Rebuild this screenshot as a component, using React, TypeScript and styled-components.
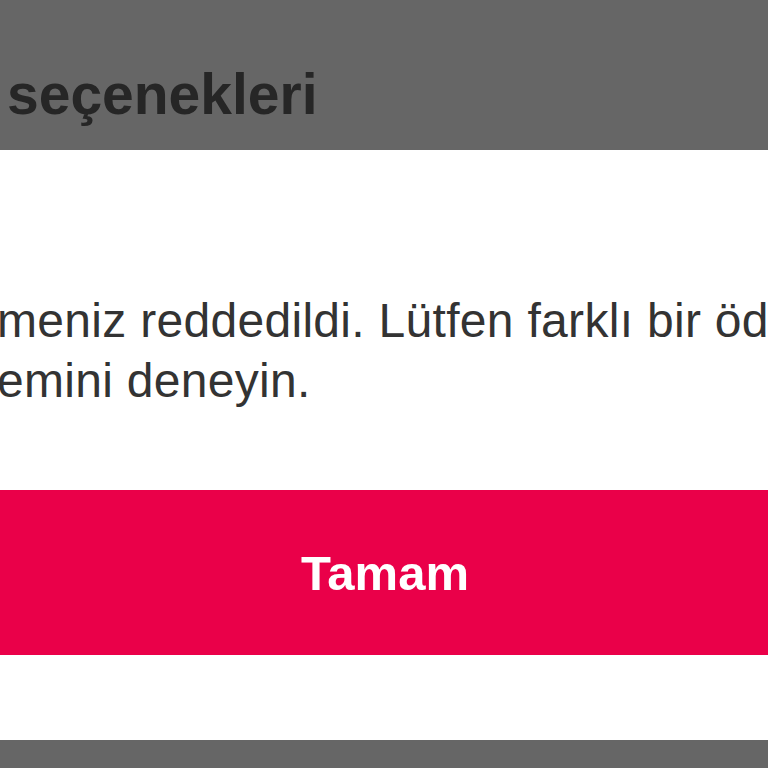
import React from "react";
import styled, { createGlobalStyle } from "styled-components";

const Global = createGlobalStyle`
  html, body { margin: 0; padding: 0; background: #666666; }
  body { font-family: "Liberation Sans", Arial, sans-serif; overflow: hidden; }
`;

const Page = styled.div`
  width: 768px;
  height: 768px;
  display: flex;
  flex-direction: column;
  overflow: hidden;
  background: #666666;
`;

const Header = styled.header`
  height: 150px;
  flex: none;
  display: flex;
  align-items: flex-start;
  padding-left: 7px;
  box-sizing: border-box;
  background: #666666;
`;

const Title = styled.h1`
  margin: 62px 0 0 0;
  font-size: 57px;
  line-height: 64px;
  font-weight: 700;
  color: #262626;
  white-space: nowrap;
  letter-spacing: 0;
`;

const Sheet = styled.section`
  height: 590px;
  flex: none;
  background: #ffffff;
  display: flex;
  flex-direction: column;
`;

const Message = styled.p`
  margin: 141px 0 0 -3px;
  font-size: 48px;
  line-height: 60px;
  font-weight: 400;
  color: #333333;
  white-space: nowrap;
  letter-spacing: 0.3px;
`;

const Line = styled.span`
  display: block;
`;

const Button = styled.button`
  margin-top: 79px;
  height: 165px;
  width: 100%;
  border: none;
  background: #ea0049;
  color: #ffffff;
  font-family: "Liberation Sans", Arial, sans-serif;
  font-size: 49px;
  font-weight: 700;
  padding: 0 0 0 2px;
  cursor: pointer;
`;

export default function App() {
  return (
    <>
      <Global />
      <Page>
        <Header>
          <Title>seçenekleri</Title>
        </Header>
        <Sheet>
          <Message>
            <Line>meniz reddedildi. Lütfen farklı bir ödeme</Line>
            <Line>emini deneyin.</Line>
          </Message>
          <Button>Tamam</Button>
        </Sheet>
      </Page>
    </>
  );
}
